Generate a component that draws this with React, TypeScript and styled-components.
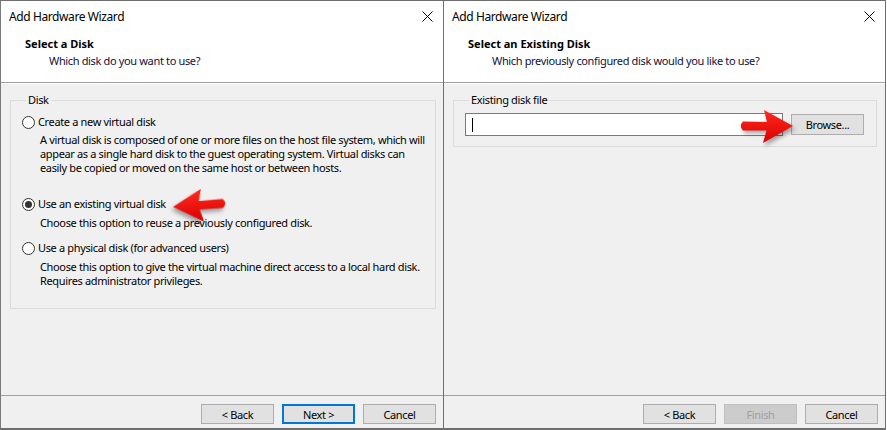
import styled, { createGlobalStyle } from "styled-components";

const GlobalStyle = createGlobalStyle`
  html, body {
    margin: 0;
    padding: 0;
    background: #ffffff;
  }
  body {
    font-family: "Noto Sans", "Open Sans", sans-serif;
    font-size: 11px;
    letter-spacing: -0.35px;
    color: #000;
  }
`;

const CloseIcon = () => (
  <svg width="11" height="11" viewBox="0 0 11 11">
    <path d="M0.5 0.5 L10.5 10.5 M10.5 0.5 L0.5 10.5" stroke="#000" strokeWidth="1" />
  </svg>
);

const RedArrow = ({ left }: { left?: boolean }) => (
  <ArrowWrap $left={left}>
    <svg width="60" height="38" viewBox="0 0 60 38">
      <defs>
        <linearGradient id={left ? "gl" : "gr"} x1="0" y1="0" x2="0" y2="1">
          <stop offset="0" stopColor="#ff2a1f" />
          <stop offset="1" stopColor="#d90000" />
        </linearGradient>
      </defs>
      <path
        d="M7 14.5 L31 15 L28 3 L57 19 L27 36 L30.5 23.5 L7 23.5 Q2.5 19 7 14.5 Z"
        fill={`url(#${left ? "gl" : "gr"})`}
      />
    </svg>
  </ArrowWrap>
);

type Option = {
  label: string;
  desc: string[];
  checked?: boolean;
  gap: number;
  descGap: number;
};

const options: Option[] = [
  {
    label: "Create a new virtual disk",
    desc: [
      "A virtual disk is composed of one or more files on the host file system, which will",
      "appear as a single hard disk to the guest operating system. Virtual disks can",
      "easily be copied or moved on the same host or between hosts.",
    ],
    gap: 22,
    descGap: 4,
  },
  {
    label: "Use an existing virtual disk",
    desc: ["Choose this option to reuse a previously configured disk."],
    checked: true,
    gap: 11,
    descGap: 5,
  },
  {
    label: "Use a physical disk (for advanced users)",
    desc: [
      "Choose this option to give the virtual machine direct access to a local hard disk.",
      "Requires administrator privileges.",
    ],
    gap: 0,
    descGap: 5,
  },
];

const App = () => {
  return (
    <Screen>
      <GlobalStyle />
      <Window $first>
        <TitleBar>
          <Title>Add Hardware Wizard</Title>
          <Close>
            <CloseIcon />
          </Close>
        </TitleBar>
        <Header>
          <HeaderTitle>Select a Disk</HeaderTitle>
          <HeaderSub>Which disk do you want to use?</HeaderSub>
        </Header>
        <Body>
          <Group $pt={8} $pb={20}>
            <legend>Disk</legend>
            {options.map((o) => (
              <OptionBlock key={o.label} $gap={o.gap}>
                <RadioRow>
                  <Radio $checked={o.checked} />
                  <span>{o.label}</span>
                </RadioRow>
                <Description $top={o.descGap}>
                  {o.desc.map((line) => (
                    <div key={line}>{line}</div>
                  ))}
                </Description>
              </OptionBlock>
            ))}
          </Group>
        </Body>
        <Footer>
          <Button>&lt; Back</Button>
          <Button $primary>Next &gt;</Button>
          <Button>Cancel</Button>
        </Footer>
        <ArrowSpot $x={169} $y={185}>
          <RedArrow left />
        </ArrowSpot>
      </Window>

      <Window>
        <TitleBar>
          <Title>Add Hardware Wizard</Title>
          <Close>
            <CloseIcon />
          </Close>
        </TitleBar>
        <Header>
          <HeaderTitle>Select an Existing Disk</HeaderTitle>
          <HeaderSub>Which previously configured disk would you like to use?</HeaderSub>
        </Header>
        <Body>
          <Group $pt={3} $pb={10}>
            <legend>Existing disk file</legend>
            <FileRow>
              <FileInput>
                <Caret />
              </FileInput>
              <Button $small>Browse...</Button>
            </FileRow>
          </Group>
        </Body>
        <Footer $right={7}>
          <Button>&lt; Back</Button>
          <Button $disabled>Finish</Button>
          <Button>Cancel</Button>
        </Footer>
        <ArrowSpot $x={292} $y={106}>
          <RedArrow />
        </ArrowSpot>
      </Window>
    </Screen>
  );
};

const Screen = styled.div`
  display: flex;
  width: 887px;
  height: 430px;
  align-items: flex-start;
`;

const Window = styled.div<{ $first?: boolean }>`
  position: relative;
  box-sizing: border-box;
  display: flex;
  flex-direction: column;
  width: ${(p) => (p.$first ? "444px" : "442px")};
  height: 430px;
  background: #f0f0f0;
  border: 1px solid #6e6e6e;
  border-left: ${(p) => (p.$first ? "1px solid #7a7a7a" : "none")};
  border-bottom: 2px solid #6e6e6e;
`;

const TitleBar = styled.div`
  height: 30px;
  display: flex;
  align-items: center;
  justify-content: space-between;
  background: #fff;
  padding: 0 10px 0 8px;
`;

const Title = styled.span`
  font-size: 12px;
  letter-spacing: -0.4px;
  color: #000;
  padding-top: 1px;
`;

const Close = styled.span`
  display: flex;
  align-items: center;
  width: 11px;
  height: 11px;
`;

const Header = styled.div`
  height: 52px;
  box-sizing: border-box;
  background: #fff;
  border-bottom: 1px solid #a0a0a0;
  padding: 4px 0 0 24px;
  line-height: 17px;
  white-space: nowrap;
`;

const HeaderTitle = styled.div`
  font-weight: bold;
  font-size: 11px;
  letter-spacing: 0;
`;

const HeaderSub = styled.div`
  padding-left: 24px;
  color: #101040;
`;

const Body = styled.div`
  flex: 1;
  padding: 9px 8px 0 9px;
  border-top: 1px solid #fff;
`;

const Group = styled.fieldset<{ $pt: number; $pb: number }>`
  margin: 0;
  border: 1px solid #dcdcdc;
  padding: ${(p) => p.$pt}px 10px ${(p) => p.$pb}px 11px;
  line-height: 14px;
  white-space: nowrap;
  legend {
    padding: 0 2px;
    margin-left: 4px;
    line-height: 14px;
  }
`;

const OptionBlock = styled.div<{ $gap: number }>`
  margin-bottom: ${(p) => p.$gap}px;
`;

const RadioRow = styled.div`
  display: flex;
  align-items: center;
  gap: 3px;
  height: 14px;
`;

const Radio = styled.span<{ $checked?: boolean }>`
  box-sizing: border-box;
  width: 13px;
  height: 13px;
  border-radius: 50%;
  border: 1px solid #333;
  background: #fff;
  display: flex;
  align-items: center;
  justify-content: center;
  &::after {
    content: "";
    width: 7px;
    height: 7px;
    border-radius: 50%;
    background: #333;
    display: ${(p) => (p.$checked ? "block" : "none")};
  }
`;

const Description = styled.div<{ $top: number }>`
  margin-top: ${(p) => p.$top}px;
  padding-left: 18px;
`;

const FileRow = styled.div`
  display: flex;
  align-items: center;
  gap: 8px;
  padding-top: 3px;
`;

const FileInput = styled.div`
  box-sizing: border-box;
  width: 318px;
  height: 23px;
  background: #fff;
  border: 1px solid #7a7a7a;
  display: flex;
  align-items: center;
  padding-left: 6px;
`;

const Caret = styled.span`
  width: 1px;
  height: 14px;
  background: #000;
`;

const Footer = styled.div<{ $right?: number }>`
  height: 33px;
  box-sizing: border-box;
  border-top: 1px solid #a0a0a0;
  display: flex;
  justify-content: flex-end;
  align-items: flex-start;
  gap: 8px;
  padding: 8px ${(p) => p.$right ?? 7}px 0 0;
`;

const Button = styled.button<{ $primary?: boolean; $disabled?: boolean; $small?: boolean }>`
  box-sizing: border-box;
  width: 73px;
  height: ${(p) => (p.$small ? "21px" : "20px")};
  margin: 0;
  padding: 0;
  font-family: "Noto Sans", "Open Sans", sans-serif;
  font-size: 11px;
  letter-spacing: -0.35px;
  color: ${(p) => (p.$disabled ? "#a0a0a0" : "#000")};
  background: ${(p) => (p.$disabled ? "#cccccc" : "#e1e1e1")};
  border: ${(p) =>
    p.$primary ? "2px solid #0078d7" : p.$disabled ? "1px solid #bfbfbf" : "1px solid #adadad"};
`;

const ArrowSpot = styled.div<{ $x: number; $y: number }>`
  position: absolute;
  left: ${(p) => p.$x}px;
  top: ${(p) => p.$y}px;
`;

const ArrowWrap = styled.div<{ $left?: boolean }>`
  transform: ${(p) => (p.$left ? "scaleX(-1) rotate(4deg)" : "none")};
  filter: drop-shadow(2px 3px 2px rgba(0, 0, 0, 0.35));
  svg {
    display: block;
  }
`;

export default App;
